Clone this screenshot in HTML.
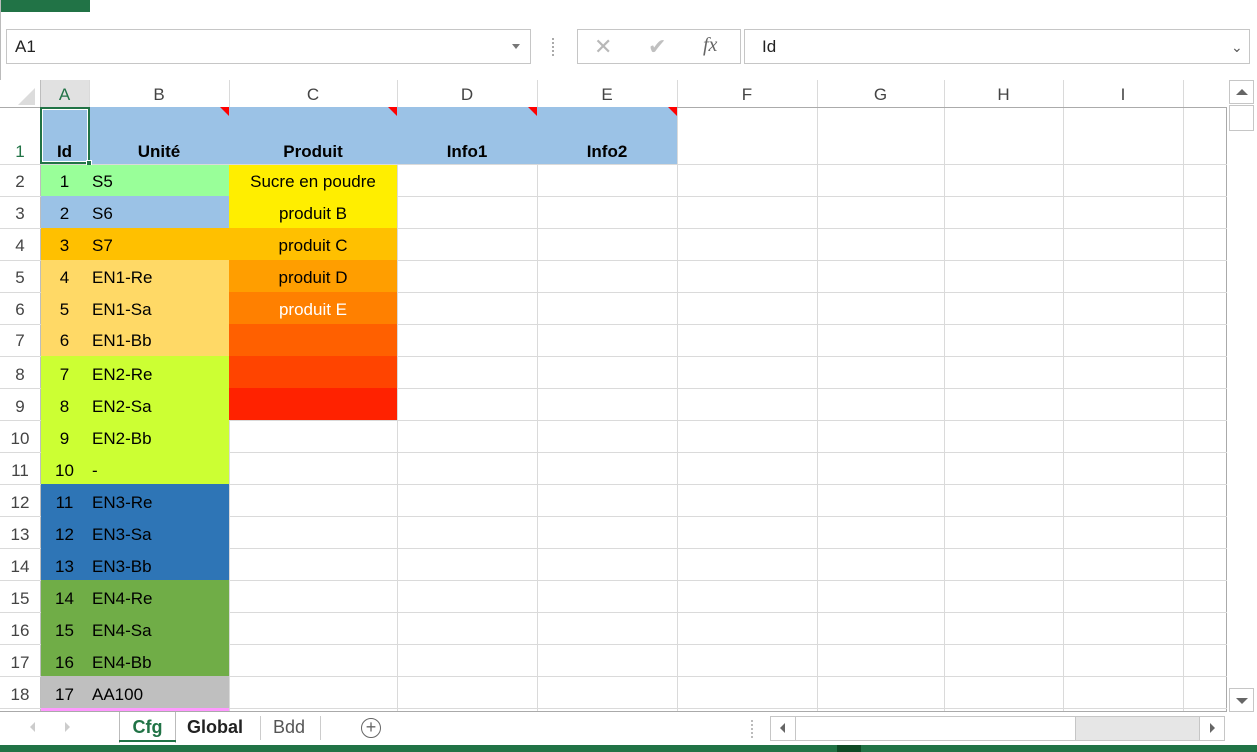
<!DOCTYPE html>
<html><head><meta charset="utf-8"><style>
*{margin:0;padding:0;box-sizing:border-box}
body{width:1257px;height:752px;position:relative;overflow:hidden;background:#fff;font-family:"Liberation Sans",sans-serif;}
.a{position:absolute}
.v{position:absolute;width:1px;background:#dadada;top:80px;height:631px}
.h{position:absolute;height:1px;background:#dadada;left:0;width:1227px}
.f{position:absolute;font-size:17px;color:#000;line-height:32px;height:32px}
.c{left:40px;width:49px;text-align:center}
.n{position:absolute;left:0;width:40px;text-align:center;font-size:17px;color:#444;line-height:32px}
.ch{position:absolute;top:80px;height:27px;line-height:30px;text-align:center;font-size:17px;color:#444}
.tri{position:absolute;top:107px;width:0;height:0;border-top:9px solid #f00;border-left:9px solid transparent}
.b1{position:absolute;top:140px;font-weight:bold;font-size:17px;text-align:center;line-height:24px}
</style></head><body>
<div class="a" style="left:0;top:0;width:90px;height:12px;background:#217346"></div>
<div class="a" style="left:0;top:0;width:1px;height:80px;background:#bbb"></div>
<!-- formula bar -->
<div class="a" style="left:6px;top:29px;width:525px;height:35px;border:1px solid #c6c6c6"></div>
<div class="a" style="left:15px;top:29px;line-height:35px;font-size:17px;color:#222">A1</div>
<div class="a" style="left:512px;top:44px;border-top:5px solid #777;border-left:4px solid transparent;border-right:4px solid transparent"></div>
<div class="a" style="left:552px;top:38px;width:2px;height:18px;border-left:2px dotted #aaa"></div>
<div class="a" style="left:577px;top:29px;width:164px;height:35px;border:1px solid #c6c6c6"></div>
<div class="a" style="left:594px;top:29px;line-height:35px;font-size:22px;color:#b8b8b8">✕</div>
<div class="a" style="left:648px;top:29px;line-height:35px;font-size:22px;color:#c0c0c0">✔</div>
<div class="a" style="left:703px;top:29px;line-height:33px;font-size:20px;color:#666;font-style:italic;font-family:'Liberation Serif',serif">fx</div>
<div class="a" style="left:744px;top:29px;width:506px;height:35px;border:1px solid #c6c6c6"></div>
<div class="a" style="left:762px;top:29px;line-height:35px;font-size:17px;color:#222">Id</div>
<div class="a" style="left:1231px;top:37px;font-size:14px;color:#555;line-height:20px">&#x2304;</div>
<!-- column headers -->
<div class="a" style="left:0;top:80px;width:40px;height:27px;background:#fff"></div>
<div class="a" style="left:18px;top:88px;width:0;height:0;border-bottom:17px solid #dcdcdc;border-left:17px solid transparent"></div>
<div class="a" style="left:40px;top:80px;width:49px;height:27px;background:#e1e1e1"></div>
<div class="ch" style="left:40px;width:49px;color:#217346">A</div>
<div class="ch" style="left:89px;width:140px">B</div>
<div class="ch" style="left:229px;width:168px">C</div>
<div class="ch" style="left:397px;width:140px">D</div>
<div class="ch" style="left:537px;width:140px">E</div>
<div class="ch" style="left:677px;width:140px">F</div>
<div class="ch" style="left:817px;width:127px">G</div>
<div class="ch" style="left:944px;width:119px">H</div>
<div class="ch" style="left:1063px;width:120px">I</div>
<!-- grid lines -->
<div class="v" style="left:40px;background:#bdbdbd"></div>
<div class="v" style="left:89px"></div><div class="v" style="left:229px"></div><div class="v" style="left:397px"></div><div class="v" style="left:537px"></div><div class="v" style="left:677px"></div><div class="v" style="left:817px"></div><div class="v" style="left:944px"></div><div class="v" style="left:1063px"></div><div class="v" style="left:1183px"></div>
<div class="a" style="left:1226px;top:107px;width:1px;height:605px;background:#aaa"></div>
<div class="h" style="top:107px;background:#ababab"></div>
<div class="h" style="top:164px"></div><div class="h" style="top:196px"></div><div class="h" style="top:228px"></div><div class="h" style="top:260px"></div><div class="h" style="top:292px"></div><div class="h" style="top:324px"></div><div class="h" style="top:356px"></div><div class="h" style="top:388px"></div><div class="h" style="top:420px"></div><div class="h" style="top:452px"></div><div class="h" style="top:484px"></div><div class="h" style="top:516px"></div><div class="h" style="top:548px"></div><div class="h" style="top:580px"></div><div class="h" style="top:612px"></div><div class="h" style="top:644px"></div><div class="h" style="top:676px"></div><div class="h" style="top:708px"></div>
<div class="a" style="left:0;top:711px;width:1227px;height:1px;background:#aaa"></div>
<!-- row 1 -->
<div class="a" style="left:40px;top:107px;width:637px;height:57px;background:#9bc2e6"></div>
<div class="tri" style="left:220px"></div><div class="tri" style="left:388px"></div><div class="tri" style="left:528px"></div><div class="tri" style="left:668px"></div>
<div class="a" style="left:40px;top:107px;width:50px;height:57px;border:2px solid #217346"></div>
<div class="a" style="left:42px;top:109px;width:46px;height:53px;border:1px solid #fff"></div>
<div class="a" style="left:86px;top:160px;width:6px;height:6px;background:#217346;border:1px solid #fff"></div>
<div class="b1" style="left:40px;width:49px">Id</div>
<div class="b1" style="left:89px;width:140px">Unité</div>
<div class="b1" style="left:229px;width:168px">Produit</div>
<div class="b1" style="left:397px;width:140px">Info1</div>
<div class="b1" style="left:537px;width:140px">Info2</div>
<div class="n" style="top:140px;line-height:24px;color:#217346">1</div>
<!-- fills A+B -->
<div class="a" style="left:41px;top:165px;width:188px;height:31px;background:#99ff99"></div>
<div class="a" style="left:41px;top:196px;width:188px;height:32px;background:#9bc2e6"></div>
<div class="a" style="left:41px;top:228px;width:188px;height:32px;background:#ffc000"></div>
<div class="a" style="left:41px;top:260px;width:188px;height:96px;background:#ffd966"></div>
<div class="a" style="left:41px;top:356px;width:188px;height:128px;background:#ccff33"></div>
<div class="a" style="left:41px;top:484px;width:188px;height:96px;background:#2e75b6"></div>
<div class="a" style="left:41px;top:580px;width:188px;height:96px;background:#70ad47"></div>
<div class="a" style="left:41px;top:676px;width:188px;height:32px;background:#bfbfbf"></div>
<div class="a" style="left:41px;top:708px;width:188px;height:3px;background:#ff99ff"></div>
<!-- fills C -->
<div class="a" style="left:229px;top:165px;width:168px;height:63px;background:#ffee00"></div>
<div class="a" style="left:229px;top:228px;width:168px;height:32px;background:#ffc000"></div>
<div class="a" style="left:229px;top:260px;width:168px;height:32px;background:#ff9e00"></div>
<div class="a" style="left:229px;top:292px;width:168px;height:32px;background:#ff8000"></div>
<div class="a" style="left:229px;top:324px;width:168px;height:32px;background:#ff6000"></div>
<div class="a" style="left:229px;top:356px;width:168px;height:32px;background:#ff4400"></div>
<div class="a" style="left:229px;top:388px;width:168px;height:32px;background:#ff2200"></div>
<!-- row numbers and values -->
<div class="n" style="top:166px">2</div><div class="f c" style="top:166px">1</div><div class="f" style="left:92px;top:166px">S5</div><div class="f" style="left:229px;width:168px;text-align:center;top:166px">Sucre en poudre</div>
<div class="n" style="top:198px">3</div><div class="f c" style="top:198px">2</div><div class="f" style="left:92px;top:198px">S6</div><div class="f" style="left:229px;width:168px;text-align:center;top:198px">produit B</div>
<div class="n" style="top:230px">4</div><div class="f c" style="top:230px">3</div><div class="f" style="left:92px;top:230px">S7</div><div class="f" style="left:229px;width:168px;text-align:center;top:230px">produit C</div>
<div class="n" style="top:262px">5</div><div class="f c" style="top:262px">4</div><div class="f" style="left:92px;top:262px">EN1-Re</div><div class="f" style="left:229px;width:168px;text-align:center;top:262px">produit D</div>
<div class="n" style="top:294px">6</div><div class="f c" style="top:294px">5</div><div class="f" style="left:92px;top:294px">EN1-Sa</div><div class="f" style="left:229px;width:168px;text-align:center;top:294px;color:#fff">produit E</div>
<div class="n" style="top:325px">7</div><div class="f c" style="top:325px">6</div><div class="f" style="left:92px;top:325px">EN1-Bb</div>
<div class="n" style="top:359px">8</div><div class="f c" style="top:359px">7</div><div class="f" style="left:92px;top:359px">EN2-Re</div>
<div class="n" style="top:391px">9</div><div class="f c" style="top:391px">8</div><div class="f" style="left:92px;top:391px">EN2-Sa</div>
<div class="n" style="top:423px">10</div><div class="f c" style="top:423px">9</div><div class="f" style="left:92px;top:423px">EN2-Bb</div>
<div class="n" style="top:455px">11</div><div class="f c" style="top:455px">10</div><div class="f" style="left:92px;top:455px">-</div>
<div class="n" style="top:487px">12</div><div class="f c" style="top:487px">11</div><div class="f" style="left:92px;top:487px">EN3-Re</div>
<div class="n" style="top:519px">13</div><div class="f c" style="top:519px">12</div><div class="f" style="left:92px;top:519px">EN3-Sa</div>
<div class="n" style="top:551px">14</div><div class="f c" style="top:551px">13</div><div class="f" style="left:92px;top:551px">EN3-Bb</div>
<div class="n" style="top:583px">15</div><div class="f c" style="top:583px">14</div><div class="f" style="left:92px;top:583px">EN4-Re</div>
<div class="n" style="top:615px">16</div><div class="f c" style="top:615px">15</div><div class="f" style="left:92px;top:615px">EN4-Sa</div>
<div class="n" style="top:647px">17</div><div class="f c" style="top:647px">16</div><div class="f" style="left:92px;top:647px">EN4-Bb</div>
<div class="n" style="top:679px">18</div><div class="f c" style="top:679px">17</div><div class="f" style="left:92px;top:679px">AA100</div>
<!-- vertical scrollbar -->
<div class="a" style="left:1229px;top:80px;width:25px;height:24px;border:1px solid #c6c6c6"></div>
<div class="a" style="left:1236px;top:89px;border-bottom:6px solid #666;border-left:6px solid transparent;border-right:6px solid transparent"></div>
<div class="a" style="left:1229px;top:105px;width:25px;height:26px;border:1px solid #c6c6c6"></div>
<div class="a" style="left:1229px;top:688px;width:25px;height:24px;border:1px solid #c6c6c6"></div>
<div class="a" style="left:1236px;top:698px;border-top:6px solid #666;border-left:6px solid transparent;border-right:6px solid transparent"></div>
<!-- tab bar -->
<div class="a" style="left:30px;top:722px;border-right:5px solid #ccc;border-top:5px solid transparent;border-bottom:5px solid transparent"></div>
<div class="a" style="left:65px;top:722px;border-left:5px solid #ccc;border-top:5px solid transparent;border-bottom:5px solid transparent"></div>
<div class="a" style="left:119px;top:712px;width:57px;height:31px;border-left:1px solid #bbb;border-right:1px solid #bbb;background:#fff"></div>
<div class="a" style="left:119px;top:740px;width:57px;height:2px;background:#217346"></div>
<div class="a" style="left:119px;top:715px;width:57px;text-align:center;font-weight:bold;font-size:18px;color:#217346;line-height:24px">Cfg</div>
<div class="a" style="left:187px;top:715px;font-weight:bold;font-size:18px;color:#222;line-height:24px">Global</div>
<div class="a" style="left:260px;top:716px;width:1px;height:24px;background:#ccc"></div>
<div class="a" style="left:273px;top:715px;font-size:18px;color:#555;line-height:24px">Bdd</div>
<div class="a" style="left:320px;top:716px;width:1px;height:24px;background:#ccc"></div>
<div class="a" style="left:361px;top:718px;width:20px;height:20px;border:1.5px solid #666;border-radius:50%;text-align:center;line-height:16px;font-size:18px;color:#666">+</div>
<div class="a" style="left:751px;top:720px;width:2px;height:18px;border-left:2px dotted #bbb"></div>
<div class="a" style="left:770px;top:716px;width:455px;height:25px;border:1px solid #c6c6c6;background:#e6e6e6"></div>
<div class="a" style="left:771px;top:717px;width:305px;height:23px;background:#fff;border-right:1px solid #c6c6c6"></div>
<div class="a" style="left:771px;top:717px;width:25px;height:23px;border-right:1px solid #c6c6c6"></div>
<div class="a" style="left:780px;top:723px;border-right:5px solid #666;border-top:5px solid transparent;border-bottom:5px solid transparent"></div>
<div class="a" style="left:1199px;top:717px;width:25px;height:23px;border-left:1px solid #c6c6c6;background:#fff"></div>
<div class="a" style="left:1210px;top:723px;border-left:5px solid #666;border-top:5px solid transparent;border-bottom:5px solid transparent"></div>
<div class="a" style="left:0;top:745px;width:1257px;height:7px;background:#217346"></div>
<div class="a" style="left:837px;top:745px;width:24px;height:7px;background:#0e4a25"></div>
</body></html>
